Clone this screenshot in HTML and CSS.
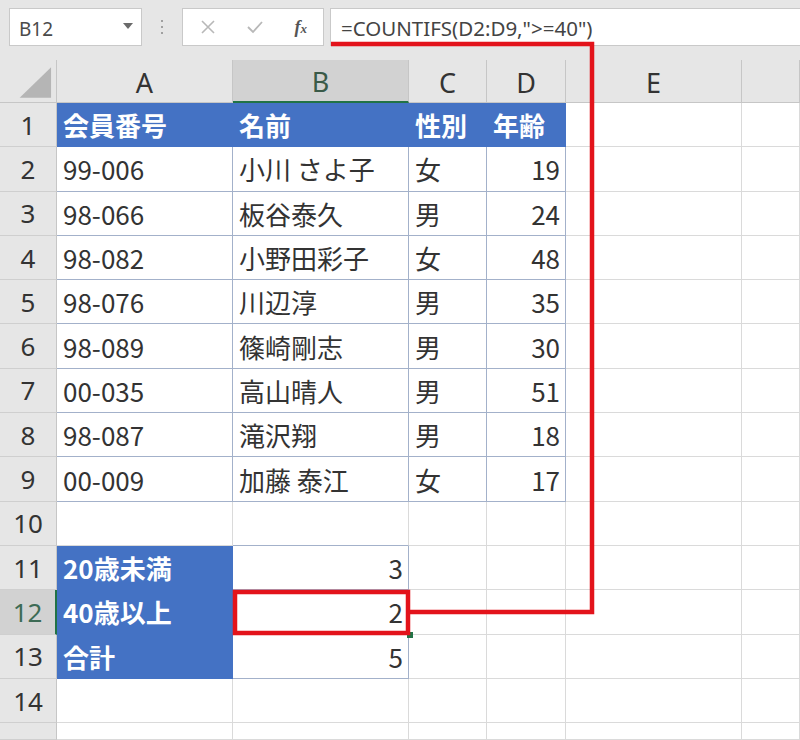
FILE: index.html
```html
<!DOCTYPE html>
<html lang="ja">
<head>
<meta charset="utf-8">
<link rel="stylesheet" href="styles.css">
</head>
<body>
<div class="app">
  <div class="fbar">
    <div class="namebox"><span>B12</span><svg class="dd" width="10" height="6" viewBox="0 0 10 6"><path d="M0 0H10L5 6Z" fill="#6a6a6a"/></svg></div>
    <div class="dots"><i></i><i></i><i></i></div>
    <div class="btns">
      <svg width="16" height="16" viewBox="0 0 16 16"><path d="M2 2L14 14M14 2L2 14" stroke="#b8b8b8" stroke-width="1.6"/></svg>
      <svg width="18" height="16" viewBox="0 0 18 16"><path d="M2 8L7 13L16 3" stroke="#b8b8b8" stroke-width="1.8" fill="none"/></svg>
      <span class="fx">f<small>x</small></span>
    </div>
    <div class="formula">=COUNTIFS(D2:D9,"&gt;=40")</div>
  </div>
  <div class="sheet">
    <div class="c corner"><svg width="57" height="43" viewBox="0 0 57 43"><path d="M20 38H52V7Z" fill="#b5b5b5"/></svg></div>
    <div class="c ch">A</div><div class="c ch sel">B</div><div class="c ch">C</div><div class="c ch">D</div><div class="c ch">E</div><div class="c ch"></div>

    <div class="c rh">1</div><div class="c h">会員番号</div><div class="c h">名前</div><div class="c h">性別</div><div class="c h">年齢</div><div class="c"></div><div class="c"></div>
    <div class="c rh">2</div><div class="c t">99-006</div><div class="c t">小川 さよ子</div><div class="c t">女</div><div class="c t n">19</div><div class="c"></div><div class="c"></div>
    <div class="c rh">3</div><div class="c t">98-066</div><div class="c t">板谷泰久</div><div class="c t">男</div><div class="c t n">24</div><div class="c"></div><div class="c"></div>
    <div class="c rh">4</div><div class="c t">98-082</div><div class="c t">小野田彩子</div><div class="c t">女</div><div class="c t n">48</div><div class="c"></div><div class="c"></div>
    <div class="c rh">5</div><div class="c t">98-076</div><div class="c t">川辺淳</div><div class="c t">男</div><div class="c t n">35</div><div class="c"></div><div class="c"></div>
    <div class="c rh">6</div><div class="c t">98-089</div><div class="c t">篠崎剛志</div><div class="c t">男</div><div class="c t n">30</div><div class="c"></div><div class="c"></div>
    <div class="c rh">7</div><div class="c t">00-035</div><div class="c t">高山晴人</div><div class="c t">男</div><div class="c t n">51</div><div class="c"></div><div class="c"></div>
    <div class="c rh">8</div><div class="c t">98-087</div><div class="c t">滝沢翔</div><div class="c t">男</div><div class="c t n">18</div><div class="c"></div><div class="c"></div>
    <div class="c rh">9</div><div class="c t">00-009</div><div class="c t">加藤 泰江</div><div class="c t">女</div><div class="c t n">17</div><div class="c"></div><div class="c"></div>
    <div class="c rh">10</div><div class="c"></div><div class="c bt"></div><div class="c"></div><div class="c"></div><div class="c"></div><div class="c"></div>
    <div class="c rh">11</div><div class="c h">20歳未満</div><div class="c t n">3</div><div class="c"></div><div class="c"></div><div class="c"></div><div class="c"></div>
    <div class="c rh rsel">12</div><div class="c h">40歳以上</div><div class="c t n">2</div><div class="c"></div><div class="c"></div><div class="c"></div><div class="c"></div>
    <div class="c rh">13</div><div class="c h">合計</div><div class="c t n">5</div><div class="c"></div><div class="c"></div><div class="c"></div><div class="c"></div>
    <div class="c rh">14</div><div class="c"></div><div class="c"></div><div class="c"></div><div class="c"></div><div class="c"></div><div class="c"></div>
    <div class="c rh"></div><div class="c"></div><div class="c"></div><div class="c"></div><div class="c"></div><div class="c"></div><div class="c"></div>
  </div>
  <svg class="annot" width="800" height="740" viewBox="0 0 800 740">
    <rect x="407" y="632" width="6" height="6" fill="#217346"/>
    <polyline points="331,44 592,44 592,612 410,612" fill="none" stroke="#e3131b" stroke-width="4.5"/>
    <rect x="235" y="592" width="173" height="41" fill="none" stroke="#e3131b" stroke-width="4.5"/>
  </svg>
</div>
</body>
</html>
```

FILE: styles.css
```css
html, body {
  margin: 0;
  padding: 0;
  background: #ffffff;
}
.app {
  position: relative;
  width: 800px;
  height: 740px;
  overflow: hidden;
  font-family: "Noto Sans CJK JP", sans-serif;
}
.fbar {
  height: 60px;
  box-sizing: border-box;
  background: #e6e6e6;
  display: flex;
  align-items: flex-start;
  padding: 8px 0 0 9px;
}
.namebox {
  width: 133px;
  height: 38px;
  box-sizing: border-box;
  background: #fff;
  border: 1px solid #c9c9c9;
  display: flex;
  align-items: center;
  justify-content: space-between;
  padding: 0 8px 0 9px;
  font-family: "Noto Sans", "Open Sans", sans-serif;
  font-size: 19px;
  color: #4a4a4a;
}
.namebox span { margin-top: 3px; }
.dd { margin-top: -2px; }
.dots {
  width: 40px;
  height: 38px;
  display: flex;
  flex-direction: column;
  align-items: center;
  justify-content: center;
  gap: 4px;
}
.dots i {
  display: block;
  width: 2px;
  height: 2px;
  background: #a0a0a0;
}
.btns {
  width: 142px;
  height: 38px;
  box-sizing: border-box;
  background: #fff;
  border: 1px solid #c9c9c9;
  display: flex;
  align-items: center;
  padding: 0 16px 0 17px;
  justify-content: space-between;
}
.fx {
  font-family: "Liberation Serif", serif;
  font-style: italic;
  font-weight: bold;
  font-size: 18px;
  color: #555;
}
.fx small {
  font-size: 13px;
}
.formula {
  margin-left: 6px;
  flex: 1;
  height: 38px;
  box-sizing: border-box;
  background: #fff;
  border: 1px solid #c9c9c9;
  border-right: none;
  display: flex;
  align-items: center;
  padding: 2px 0 0 10px;
  font-family: "Noto Sans", "Open Sans", sans-serif;
  font-size: 20.5px;
  color: #444;
}
.sheet {
  display: grid;
  grid-template-columns: 57px 176px 176px 78px 79px 176px 58px;
  grid-template-rows: 43px repeat(14, 44.3px) 1fr;
  height: 680px;
}
.c {
  box-sizing: border-box;
  border-right: 1px solid #dadada;
  border-bottom: 1px solid #dadada;
  display: flex;
  align-items: center;
  padding: 0 6px;
  font-size: 26px;
  color: #333;
  white-space: nowrap;
  overflow: hidden;
}
.corner {
  background: #e6e6e6;
  padding: 0;
  border-right: 1px solid #c6c6c6;
  border-bottom: 1px solid #c6c6c6;
}
.ch {
  background: #e6e6e6;
  justify-content: center;
  font-family: "Noto Sans", "Open Sans", sans-serif;
  font-size: 27px;
  color: #333;
  border-right: 1px solid #c6c6c6;
  border-bottom: 1px solid #c6c6c6;
  padding-top: 2px;
}
.ch.sel {
  background: #d2d2d2;
  border-bottom: 2px solid #217346;
  color: #3a5a48;
}
.rh {
  background: #e6e6e6;
  justify-content: center;
  font-family: "Noto Sans", "Open Sans", sans-serif;
  font-size: 26px;
  color: #333;
  border-right: 1px solid #c6c6c6;
  border-bottom: 1px solid #cfcfcf;
  padding: 0;
}
.rh.rsel {
  background: #d2d2d2;
  border-right: 2px solid #217346;
  color: #3d6b55;
}
.h {
  background: #4472c4;
  color: #ffffff;
  font-weight: bold;
  border-right-color: #4472c4;
  border-bottom-color: #4472c4;
}
.t {
  border-right-color: #a3b1ca;
  border-bottom-color: #a3b1ca;
}
.bt {
  border-bottom-color: #a3b1ca;
}
.n {
  justify-content: flex-end;
  padding-right: 5px;
}
.annot {
  position: absolute;
  left: 0;
  top: 0;
  pointer-events: none;
}
```
